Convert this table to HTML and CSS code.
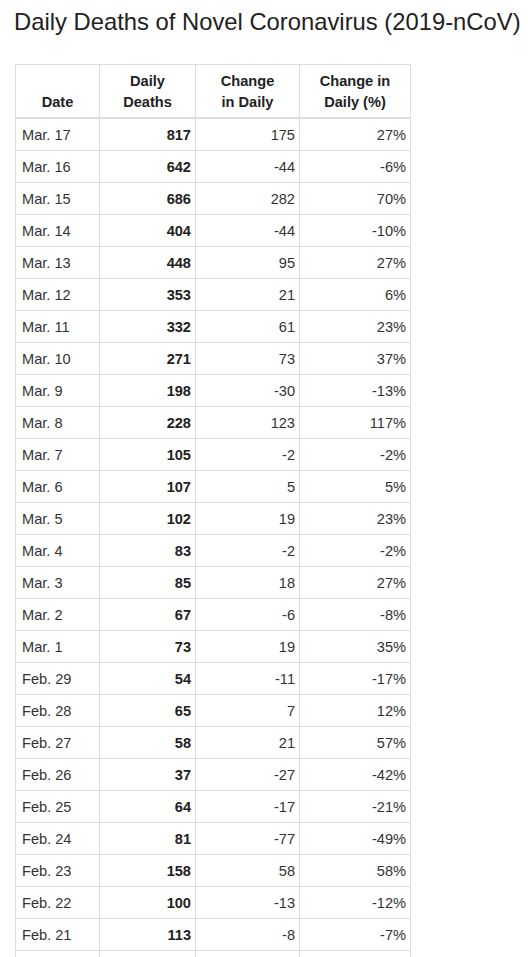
FILE: index.html
```html
<!DOCTYPE html>
<html>
<head>
<meta charset="utf-8">
<title>Daily Deaths</title>
<link rel="stylesheet" href="styles.css">
</head>
<body>
<div class="page">
  <h1 class="title">Daily Deaths of Novel Coronavirus (2019-nCoV)</h1>
  <table class="deaths">
    <colgroup>
      <col class="c-date"><col class="c-daily"><col class="c-change"><col class="c-pct">
    </colgroup>
    <thead>
      <tr><th>Date</th><th>Daily<br>Deaths</th><th>Change<br>in Daily</th><th>Change in<br>Daily (%)</th></tr>
    </thead>
    <tbody>
      <tr><td>Mar. 17</td><td class="num b">817</td><td class="num">175</td><td class="num">27%</td></tr>
      <tr><td>Mar. 16</td><td class="num b">642</td><td class="num">-44</td><td class="num">-6%</td></tr>
      <tr><td>Mar. 15</td><td class="num b">686</td><td class="num">282</td><td class="num">70%</td></tr>
      <tr><td>Mar. 14</td><td class="num b">404</td><td class="num">-44</td><td class="num">-10%</td></tr>
      <tr><td>Mar. 13</td><td class="num b">448</td><td class="num">95</td><td class="num">27%</td></tr>
      <tr><td>Mar. 12</td><td class="num b">353</td><td class="num">21</td><td class="num">6%</td></tr>
      <tr><td>Mar. 11</td><td class="num b">332</td><td class="num">61</td><td class="num">23%</td></tr>
      <tr><td>Mar. 10</td><td class="num b">271</td><td class="num">73</td><td class="num">37%</td></tr>
      <tr><td>Mar. 9</td><td class="num b">198</td><td class="num">-30</td><td class="num">-13%</td></tr>
      <tr><td>Mar. 8</td><td class="num b">228</td><td class="num">123</td><td class="num">117%</td></tr>
      <tr><td>Mar. 7</td><td class="num b">105</td><td class="num">-2</td><td class="num">-2%</td></tr>
      <tr><td>Mar. 6</td><td class="num b">107</td><td class="num">5</td><td class="num">5%</td></tr>
      <tr><td>Mar. 5</td><td class="num b">102</td><td class="num">19</td><td class="num">23%</td></tr>
      <tr><td>Mar. 4</td><td class="num b">83</td><td class="num">-2</td><td class="num">-2%</td></tr>
      <tr><td>Mar. 3</td><td class="num b">85</td><td class="num">18</td><td class="num">27%</td></tr>
      <tr><td>Mar. 2</td><td class="num b">67</td><td class="num">-6</td><td class="num">-8%</td></tr>
      <tr><td>Mar. 1</td><td class="num b">73</td><td class="num">19</td><td class="num">35%</td></tr>
      <tr><td>Feb. 29</td><td class="num b">54</td><td class="num">-11</td><td class="num">-17%</td></tr>
      <tr><td>Feb. 28</td><td class="num b">65</td><td class="num">7</td><td class="num">12%</td></tr>
      <tr><td>Feb. 27</td><td class="num b">58</td><td class="num">21</td><td class="num">57%</td></tr>
      <tr><td>Feb. 26</td><td class="num b">37</td><td class="num">-27</td><td class="num">-42%</td></tr>
      <tr><td>Feb. 25</td><td class="num b">64</td><td class="num">-17</td><td class="num">-21%</td></tr>
      <tr><td>Feb. 24</td><td class="num b">81</td><td class="num">-77</td><td class="num">-49%</td></tr>
      <tr><td>Feb. 23</td><td class="num b">158</td><td class="num">58</td><td class="num">58%</td></tr>
      <tr><td>Feb. 22</td><td class="num b">100</td><td class="num">-13</td><td class="num">-12%</td></tr>
      <tr><td>Feb. 21</td><td class="num b">113</td><td class="num">-8</td><td class="num">-7%</td></tr>
      <tr><td>Feb. 20</td><td class="num b">121</td><td class="num">-15</td><td class="num">-11%</td></tr>
      <tr><td>Feb. 19</td><td class="num b">136</td><td class="num">-3</td><td class="num">-2%</td></tr>
    </tbody>
  </table>
</div>
</body>
</html>
```
FILE: styles.css
```css
html, body {
  margin: 0;
  padding: 0;
  background: #fff;
}
.page {
  padding: 8px 0 0 14px;
  font-family: "Liberation Sans", Arial, sans-serif;
  color: #333;
}
.title {
  margin: 0 0 29px 0;
  font-size: 23.8px;
  line-height: 27px;
  font-weight: normal;
  color: #222;
  white-space: nowrap;
}
.deaths {
  margin-left: 1px;
  border-collapse: collapse;
  table-layout: fixed;
  width: 395px;
  font-size: 14.6px;
  line-height: 21px;
}
.c-date { width: 84px; }
.c-daily { width: 96px; }
.c-change { width: 104px; }
.c-pct { width: 111px; }
.deaths th, .deaths td {
  border: 1px solid #ddd;
}
.deaths th {
  padding: 6px 5px 4px;
  font-weight: bold;
  text-align: center;
  vertical-align: bottom;
  border-bottom: 2px solid #ddd;
  color: #222;
}
.deaths td {
  padding: 6px 5px 4px 6px;
  text-align: left;
  vertical-align: middle;
}
.deaths td.num {
  text-align: right;
  padding-right: 4px;
}
.deaths td.b {
  font-weight: bold;
  color: #222;
}
```
